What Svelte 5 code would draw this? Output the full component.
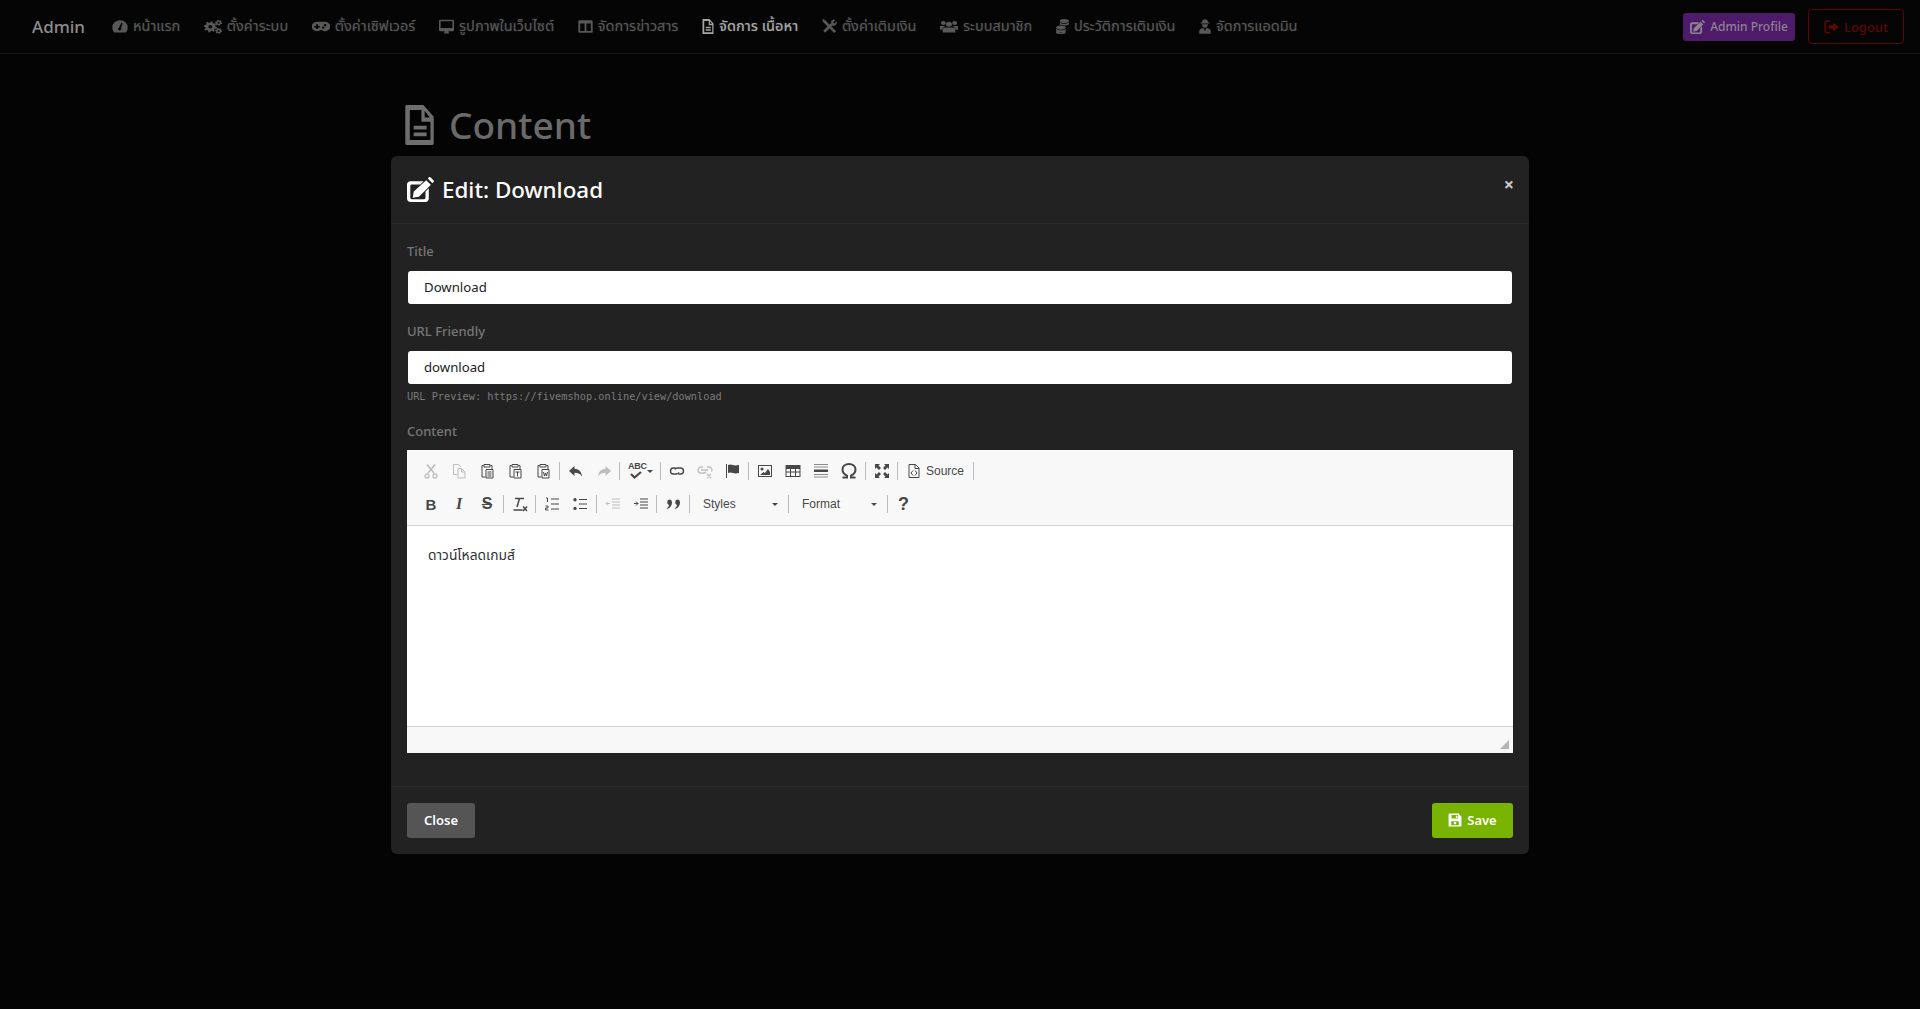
<script>
  function gear(cx, cy, r, teeth = 8) {
    const pts = [];
    const n = teeth * 4;
    for (let i = 0; i < n; i++) {
      const a = ((i + 0.5) / n) * Math.PI * 2;
      const rr = i % 4 < 2 ? r : r * 0.74;
      pts.push(`${(cx + Math.cos(a) * rr).toFixed(2)} ${(cy + Math.sin(a) * rr).toFixed(2)}`);
    }
    const h = r * 0.3;
    return `M${pts.join('L')}Z M${cx - h} ${cy}a${h} ${h} 0 1 0 ${2 * h} 0a${h} ${h} 0 1 0 ${-2 * h} 0Z`;
  }

  const navIcons = {
    gauge: { f: 'M12 2A11.500 11.500 0 0 0 .5 13.500c0 3 1 5.800 3 8h17c2-2.200 3-5 3-8A11.500 11.500 0 0 0 12 2zM10.600 13.600l3.600-7.600 1.800.7-2.400 8a2.400 2.400 0 1 1-3-1.100z' },
    cogs: { f: gear(8.5, 12.5, 9, 8) + gear(19.5, 6, 4.8, 6) + gear(19.5, 19, 4.8, 6) },
    game: { f: 'M7 4.500h10a7.500 7.500 0 0 1 0 15c-2.200 0-3-2-5-2s-2.800 2-5 2a7.500 7.500 0 0 1 0-15zM5.500 8.500V11H3v2.500h2.500V16H8v-2.500h2.500V11H8V8.500zM17.500 8a1.800 1.800 0 1 0 0 3.600 1.800 1.800 0 0 0 0-3.600zM15 12a1.800 1.800 0 1 0 0 3.600 1.800 1.800 0 0 0 0-3.600z' },
    desktop: { f: 'M2 1h20a2 2 0 0 1 2 2v14.500a2 2 0 0 1-2 2h-7l.5 2 1.200 1.500H7.300l1.200-1.500.5-2H2a2 2 0 0 1-2-2V3a2 2 0 0 1 2-2zM2.600 3.600V14.500h18.800V3.600z' },
    columns: { f: 'M2.500 2h19A2 2 0 0 1 23.500 4v16a2 2 0 0 1-2 2h-19a2 2 0 0 1-2-2V4a2 2 0 0 1 2-2zM3.500 7V19H10.500V7zM13.500 7V19H20.500V7z' },
    file: { f: 'M2 0h13l8 7v16a1 1 0 0 1-1 1H2a1 1 0 0 1-1-1V1a1 1 0 0 1 1-1zM4.500 3v18h16V10h-7V3zM16 3.500V7.500H20zM7.500 12.500h10v2.200h-10zM7.500 16.500h10v2.200h-10z' },
    tools: { s: 'M3.500 20.500L17 7M3 3l18 18', w: 4.500, f: 'M14.500 3.500a5.500 5.500 0 0 1 7-2l-3.500 3.500.5 1.500 1.500.5 3.500-3.500a5.500 5.500 0 0 1-7 7zM0 1.500L2.500 0l4.500 4.500-2.500 2.500z' },
    users: { f: 'M12 4.500a4 4 0 1 1 0 8 4 4 0 0 1 0-8zM4.500 3a3.300 3.300 0 1 1 0 6.600 3.300 3.300 0 0 1 0-6.600zM19.500 3a3.300 3.300 0 1 1 0 6.600 3.300 3.300 0 0 1 0-6.600zM7 13.500h10c2.200 0 3.500 1.500 3.500 4.500v3.500h-17V18c0-3 1.300-4.500 3.500-4.500zM0 11h5c.7.800 1.300 1.200 2 1.300-2.500.6-4 2.200-4 5H0zM24 11h-5c-.7.800-1.300 1.200-2 1.300 2.500.6 4 2.200 4 5h3z' },
    coins: { f: 'M15 0c5 0 9 1.200 9 3.200S20 6.500 15 6.500s-8-1.300-8-3.300S10 0 15 0zM7 5c1.500 1.500 4.500 2.500 8 2.500 3.500 0 7-.8 9-2.500v3c-1 1.500-4 2.500-7 2.500-3.500-1-7-1.500-10-1.500zM9 10.500c-5 0-9 1.200-9 3.200s4 3.300 9 3.300 9-1.300 9-3.300-4-3.200-9-3.200zM0 15.500v2.700c0 2 4 3 9 3s9-1 9-3v-2.700c-2 1.500-5.500 2.500-9 2.500s-7-1-9-2.500zM0 19.700V21.500c0 1.700 4 2.500 9 2.500s9-.8 9-2.500v-1.800c-2 1.500-5.500 2.200-9 2.200s-7-.7-9-2.200z' },
    user: { f: 'M12 .5c3.500 0 5.500 1.500 6 4.500l3 1v1H3V6l3-1C6.500 2 8.500.5 12 .5zM6 8.500h12c-.3 3.500-2.500 5.500-6 5.500s-5.700-2-6-5.500zM5 15l4-.8 3 5 3-5 4 .8c3 .8 4.500 2.500 4.500 5v3.500H.5V20c0-2.500 1.500-4.200 4.500-5z' },
    edit: { vb: 26, f: 'M3.500 4h12.500l-3.200 3.200H4.500a1.300 1.300 0 0 0-1.300 1.300v11.500a1.300 1.300 0 0 0 1.300 1.300h12a1.300 1.300 0 0 0 1.300-1.300v-6l3.200-3.200v9.700a3.500 3.500 0 0 1-3.500 3.500H3.500A3.500 3.500 0 0 1 0 20.500V7.500A3.500 3.500 0 0 1 3.500 4zM18.500 3l4.500 4.500-11.500 11.500-6 1 1-6zM20 1.500l1.200-1.200a1 1 0 0 1 1.400 0l3 3a1 1 0 0 1 0 1.400L24.500 6z' },
    signout: { f: 'M9.500 3.500H5a2 2 0 0 0-2 2v13a2 2 0 0 0 2 2h4.500v2.500H4.500A4 4 0 0 1 .5 19V5a4 4 0 0 1 4-4h5zM14.500 4.500L24 12l-9.500 7.500v-4.500H7.500V9h7z' },
    save: { f: 'M2 1h16l5 5v16a1 1 0 0 1-1 1H2a1 1 0 0 1-1-1V2a1 1 0 0 1 1-1zM6 3.500V9.500h11V3.500zM13.500 4.500h2.500v4h-2.500zM5.500 14V21h13V14zM12 15a2.300 2.300 0 1 1 0 4.600 2.300 2.300 0 0 1 0-4.600z' }
  };

  const nav = [
    { ic: 'gauge', label: 'หน้าแรก', w: 16 },
    { ic: 'cogs', label: 'ตั้งค่าระบบ', w: 18 },
    { ic: 'game', label: 'ตั้งค่าเซิฟเวอร์', w: 18 },
    { ic: 'desktop', label: 'รูปภาพในเว็บไซต์', w: 15 },
    { ic: 'columns', label: 'จัดการข่าวสาร', w: 15 },
    { ic: 'file', label: 'จัดการ เนื้อหา', w: 12, active: true },
    { ic: 'tools', label: 'ตั้งค่าเติมเงิน', w: 15 },
    { ic: 'users', label: 'ระบบสมาชิก', w: 18 },
    { ic: 'coins', label: 'ประวัติการเติมเงิน', w: 13 },
    { ic: 'user', label: 'จัดการแอดมิน', w: 12 }
  ];

  const clip = 'M4.500 2.500H3v11.500h3.500M11.500 2.500H13V6M5 1.500h6v2.500H5z';
  const ck = {
    cut: { s: 'M4 1.500l7 8.500M12 1.500l-7 8.500', w: 1.500, c: 'M4 11a2 2 0 1 0 0 4 2 2 0 0 0 0-4zM12 11a2 2 0 1 0 0 4 2 2 0 0 0 0-4z' },
    copy: { s: 'M6 11.500H2.500V1.500h5l2 2.500M7 5.500h3.500l3.500 3.500v6H7zM10.500 5.500V9H14', w: 1 },
    paste: { s: clip + 'M7 6.500h7v8.500H7zM8.500 9h4M8.500 11h4M8.500 13h4', w: 1 },
    pastet: { s: clip + 'M7 6.500h7v8.500H7zM8.500 9h4M10.500 9v4.500', w: 1 },
    pastew: { s: clip + 'M7 6.500h7v8.500H7zM8.500 9l1 4 1-3 1 3 1-4', w: 1 },
    undo: { f: 'M6.500 3L1 8l5.500 5V9.800c3 0 5.500.7 7.500 3.700C13.500 9 11 6 6.500 5.800z' },
    redo: { f: 'M9.500 3L15 8l-5.500 5V9.800c-3 0-5.500.7-7.500 3.700C2.500 9 5 6 9.500 5.800z' },
    link: { s: 'M6.500 5H4.500a3 3 0 0 0 0 6h3a3 3 0 0 0 2.500-1.500M9.500 11h2a3 3 0 0 0 0-6h-3A3 3 0 0 0 6 6.500', w: 1.400 },
    unlink: { s: 'M6 4H4a3 3 0 0 0 0 6h3a3 3 0 0 0 2-1M10 4h2a3 3 0 0 1 2.500 4.500M4 7h7M10 11l4 4M14 11l-4 4', w: 1.300 },
    flag: { s: 'M1.500 1v14', w: 1, f: 'M3 2c2-1 3.500-.5 5 0s3 .5 6 0v8c-3 .5-4.500.5-6 0s-3-1-5 0z' },
    image: { f: 'M1 2h14v12H1zM2 3v10h12V3zM5 4.500a1.500 1.500 0 1 1 0 3 1.500 1.500 0 0 1 0-3zM3 12l3.500-3 1.500 1 3-4 2 3v3z' },
    table: { f: 'M0.500 2h15v12H.5zM1.500 6v2.500h3.500V6zM6 6v2.500h4V6zM11 6v2.500h3.500V6zM1.500 9.500V13h3.500V9.500zM6 9.500V13h4V9.500zM11 9.500V13h3.500V9.500z' },
    hr: { f: 'M1 6.500h14v2.500H1z', s2: 'M1 1.500h14M1 4h14M1 11.500h14M1 14h14' },
    omega: { s: 'M1.500 14.500h4.500v-1.800C3.500 11.500 1.500 9.500 1.500 6.500 1.500 3 4.300 1 8 1s6.500 2 6.500 5.500c0 3-2 5-4.500 6.200v1.800h4.500', w: 2 },
    max: { f: 'M1 1h5L4.500 2.500 7 5 5 7 2.500 4.500 1 6zM15 1v5L13.500 4.500 11 7 9 5l2.500-2.500L10 1zM1 15v-5l1.500 1.500L5 9l2 2-2.500 2.500L6 15zM15 15h-5l1.500-1.500L9 11l2-2 2.500 2.500L15 10z' },
    source: { s: 'M3 1.500h6.500L13 5v9.500H3zM9 1.500V5.500h4M7 7.500L5 10l2 2.500M9 7.500l2 2.500-2 2.500', w: 1 },
    spell: { s: 'M3 11l3.500 3.500L13 9', w: 2.200 },
    outdent: { s: 'M7 3h8M7 6h8M7 9h8M7 12h8M5 7.500H1M3 5.500l-2 2 2 2', w: 1 },
    indent: { s: 'M7 3h8M7 6h8M7 9h8M7 12h8M1 7.500h4M3 5.500l2 2-2 2', w: 1 },
    ol: { s: 'M7 3h8M7 8h8M7 13h8M2 2h1.500v4M1.500 10h2.500v2H1.500v2H4.500', w: 1 },
    ul: { s: 'M7 3.500h8M7 8h8M7 12.500h8', w: 1.100, f: 'M3 2a1.700 1.700 0 1 1 0 3.400A1.700 1.700 0 0 1 3 2zM3 10.700a1.700 1.700 0 1 1 0 3.400 1.700 1.700 0 0 1 0-3.400z' },
    quote: { f: 'M4 3.500a3 3 0 0 1 3 3c0 3-2 5.500-4.500 6.500l-.5-1c1-.7 2-1.800 2-3a3 3 0 0 1 0-5.500zM12 3.500a3 3 0 0 1 3 3c0 3-2 5.500-4.500 6.500l-.5-1c1-.7 2-1.800 2-3a3 3 0 0 1 0-5.500z' },
    clear: { s: 'M3 2.500h9M7.500 2.500L5 11M1.500 14h9M11 10.500l4 4.500M15 10.500l-4 4.500', w: 1.500 }
  };

  const row1 = [
    [{ i: 'cut', off: true }, { i: 'copy', off: true }, { i: 'paste' }, { i: 'pastet' }, { i: 'pastew' }],
    [{ i: 'undo' }, { i: 'redo', off: true }],
    [{ spell: true }],
    [{ i: 'link' }, { i: 'unlink', off: true }, { i: 'flag' }],
    [{ i: 'image' }, { i: 'table' }, { i: 'hr' }, { i: 'omega' }],
    [{ i: 'max' }],
    [{ i: 'source', label: 'Source' }]
  ];
  const row2a = [
    [{ t: 'B', cls: 'bold' }, { t: 'I', cls: 'ital' }, { t: 'S', cls: 'strike' }],
    [{ i: 'clear' }],
    [{ i: 'ol' }, { i: 'ul' }],
    [{ i: 'outdent', off: true }, { i: 'indent' }],
    [{ i: 'quote' }]
  ];
</script>

{#snippet icon(name, cls, w)}
  <svg class={cls} style:width={w ? `${w}px` : null} viewBox="0 0 {navIcons[name].vb ?? 24} 24" preserveAspectRatio="none" aria-hidden="true">
    {#if navIcons[name].s}
      <path d={navIcons[name].s} fill="none" stroke="currentColor" stroke-width={navIcons[name].w} />
    {/if}
    {#if navIcons[name].f}
      <path d={navIcons[name].f} fill="currentColor" fill-rule="evenodd" />
    {/if}
  </svg>
{/snippet}

{#snippet ckIcon(name)}
  <svg class="ck" viewBox="0 0 16 16" aria-hidden="true">
    {#if ck[name].s}
      <path d={ck[name].s} fill="none" stroke="currentColor" stroke-width={ck[name].w ?? 1.3} />
    {/if}
    {#if ck[name].s2}
      <path d={ck[name].s2} fill="none" stroke="#8c8c8c" stroke-width="1" />
    {/if}
    {#if ck[name].c}
      <path d={ck[name].c} fill="none" stroke="currentColor" stroke-width="1.300" />
    {/if}
    {#if ck[name].f}
      <path d={ck[name].f} fill="currentColor" fill-rule="evenodd" />
    {/if}
  </svg>
{/snippet}

{#snippet groups(list)}
  {#each list as group}
    <div class="grp">
      {#each group as b}
        <span class="tb" class:off={b.off} class:wide={b.label} class:spellb={b.spell}>
          {#if b.spell}
            <span class="abc">ABC</span>
            {@render ckIcon('spell')}
            <i class="caret"></i>
          {:else if b.t}
            <span class={b.cls}>{b.t}</span>
          {:else}
            {@render ckIcon(b.i)}
            {#if b.label}<span class="lbl">{b.label}</span>{/if}
          {/if}
        </span>
      {/each}
    </div>
    <i class="sep"></i>
  {/each}
{/snippet}

<div class="page">
  <header class="nav">
    <span class="brand">Admin</span>
    <nav class="links">
      {#each nav as item}
        <span class="link" class:active={item.active}>
          {@render icon(item.ic, 'nic', item.w)}
          <span>{item.label}</span>
        </span>
      {/each}
    </nav>
    <div class="actions">
      <span class="profile">{@render icon('edit', 'aic')}Admin Profile</span>
      <span class="logout">{@render icon('signout', 'aic')}Logout</span>
    </div>
  </header>

  <main class="main">
    <h1>{@render icon('file', 'hic')}Content</h1>
  </main>
</div>

<div class="modal">
  <div class="m-head">
    <h2>{@render icon('edit', 'mic')}Edit: Download</h2>
    <span class="x">×</span>
  </div>
  <div class="m-body">
    <div class="label first">Title</div>
    <div class="input">Download</div>
    <div class="label second">URL Friendly</div>
    <div class="input">download</div>
    <div class="preview">URL Preview: https://fivemshop.online/view/download</div>
    <div class="label third">Content</div>
    <div class="editor">
      <div class="toolbar">
        <div class="trow">{@render groups(row1)}</div>
        <div class="trow">
          {@render groups(row2a)}
          <span class="combo"><span>Styles</span><i class="caret"></i></span>
          <i class="sep"></i>
          <span class="combo"><span>Format</span><i class="caret"></i></span>
          <i class="sep"></i>
          <span class="tb help">?</span>
        </div>
      </div>
      <div class="content">ดาวน์โหลดเกมส์</div>
      <div class="foot"><i class="resize"></i></div>
    </div>
  </div>
  <div class="m-foot">
    <span class="btn close">Close</span>
    <span class="btn save">{@render icon('save', 'sic')}Save</span>
  </div>
</div>

<style>
  :global(body) {
    background: #040404;
    font-family: "Noto Sans", "Noto Sans Thai", "Noto Sans CJK SC", sans-serif;
    height: 1009px;
    overflow: hidden;
  }
  .page { height: 1009px; }
  .nav {
    height: 53px;
    border-bottom: 1px solid #141414;
    background: #050505;
    display: flex;
    align-items: center;
    padding: 0 16px 0 32px;
  }
  .brand { color: #8d8d8d; font-size: 17px; font-weight: 500; width: 80px; }
  .links { display: flex; align-items: center; gap: 23.7px; flex: 1; }
  .link {
    display: flex; align-items: center; gap: 5px; color: #585858; font-size: 14.5px; white-space: nowrap;
    text-shadow: 0 0 2px rgba(88, 88, 88, .45);
  }
  .link.active { color: #a5a5a5; font-weight: 500; }
  .nic { width: 16px; height: 15px; flex: none; }
  .actions { display: flex; align-items: center; gap: 13px; }
  .profile {
    display: flex; align-items: center; gap: 5px;
    height: 28px; width: 112px; box-sizing: border-box; justify-content: center;
    background: #4e1a6a; color: #8c8291; border-radius: 3px; font-size: 12px; font-weight: 500;
  }
  .logout {
    display: flex; align-items: center; justify-content: center; gap: 5px;
    height: 35px; width: 96px; box-sizing: border-box;
    border: 1px solid #5a0508; color: #5f0508; border-radius: 4px; font-size: 13px; font-weight: 500;
  }
  .aic { width: 15px; height: 14px; }
  .main { width: 1140px; margin: 0 auto; padding-left: 14px; box-sizing: border-box; }
  h1 {
    margin: 48px 0 0; display: flex; align-items: center; gap: 14px;
    font-size: 37px; font-weight: 500; line-height: 46px; color: #6a6a6a;
  }
  .hic { width: 31px; height: 40px; color: #6e6e6e; }

  .modal {
    position: absolute; left: 391px; top: 156px; width: 1138px; height: 698px;
    background: #222; border-radius: 6px; box-sizing: border-box;
    display: flex; flex-direction: column;
  }
  .m-head {
    height: 68px; box-sizing: border-box; border-bottom: 1px solid #2a2a2a;
    display: flex; justify-content: space-between; padding: 0 15px 0 16px;
  }
  h2 {
    margin: -1px 0 0; display: flex; align-items: center; gap: 8px; height: 68px;
    font-size: 22.4px; font-weight: 500; color: #fff;
  }
  .mic { width: 27px; height: 25px; }
  .x { color: #ccc; font-size: 18px; font-weight: 700; line-height: 18px; margin-top: 19px; }
  .m-body { padding: 0 16px; flex: 1; }
  .label { color: #777; font-size: 13px; font-weight: 500; line-height: 18px; }
  .first { margin-top: 18px; margin-bottom: 11px; }
  .second { margin-top: 18px; margin-bottom: 11px; }
  .third { margin-top: 19px; margin-bottom: 10px; }
  .input {
    height: 33px; background: #fff; border-radius: 3px; color: #222; margin: 0 1px;
    font-size: 13.2px; line-height: 33px; padding-left: 16px;
  }
  .preview {
    margin-top: 5px; font-family: "DejaVu Sans Mono", monospace; font-size: 10.25px;
    line-height: 14px; color: #7c7c7c;
  }
  .editor { background: #fff; height: 303px; display: flex; flex-direction: column; }
  .toolbar {
    height: 76px; box-sizing: border-box; background: #f8f8f8; border-bottom: 1px solid #d1d1d1;
    padding: 7px 0 0 10px;
  }
  .trow { display: flex; align-items: center; height: 28px; margin-bottom: 5px; }
  .grp { display: flex; }
  .sep { width: 1px; height: 18px; background: #bcbcbc; margin: 0 2px 0 1.5px; flex: none; }
  .tb {
    width: 28px; height: 28px; display: flex; align-items: center; justify-content: center;
    color: #474747; flex: none;
  }
  .tb.off { color: #bdbdbd; }
  .tb.wide { width: 71px; gap: 4px; justify-content: flex-start; padding-left: 6px; box-sizing: border-box; }
  .ck { width: 16px; height: 16px; flex: none; }
  .lbl, .combo { font-family: "Liberation Sans", sans-serif; font-size: 12px; color: #484848; }
  .spellb { width: 36px; position: relative; justify-content: flex-start; padding-left: 6px; box-sizing: border-box; }
  .abc {
    position: absolute; left: 6px; top: 5px; font-family: "Liberation Sans", sans-serif;
    font-size: 9px; font-weight: 700; letter-spacing: -.3px; line-height: 9px;
  }
  .caret {
    width: 0; height: 0; border-left: 3px solid transparent; border-right: 3px solid transparent;
    border-top: 3px solid #474747; display: block;
  }
  .spellb .caret { position: absolute; left: 25px; top: 13px; }
  .bold, .ital, .strike { font-family: "Liberation Serif", serif; font-size: 16px; font-weight: 700; }
  .bold { font-family: "Liberation Sans", sans-serif; font-size: 15px; }
  .ital { font-style: italic; }
  .strike { font-family: "Liberation Sans", sans-serif; text-decoration: line-through; font-size: 16px; }
  .combo {
    width: 94.5px; height: 28px; box-sizing: border-box; padding: 0 8px 0 11.5px;
    display: flex; align-items: center; justify-content: space-between; flex: none;
  }
  .help { font-family: "Liberation Sans", sans-serif; font-size: 18px; font-weight: 700; }
  .content { flex: 1; padding: 20px 0 0 21px; font-size: 13.8px; line-height: 18px; color: #333; }
  .foot {
    height: 27px; box-sizing: border-box; background: #f8f8f8; border-top: 1px solid #d1d1d1;
    position: relative;
  }
  .resize {
    position: absolute; right: 4px; bottom: 4px; width: 0; height: 0;
    border-left: 9px solid transparent; border-bottom: 9px solid #b5b5b5; display: block;
  }
  .m-foot {
    height: 68px; box-sizing: border-box; border-top: 1px solid #2a2a2a;
    display: flex; justify-content: space-between; align-items: flex-start;
    padding: 16px;
  }
  .btn {
    height: 35px; border-radius: 3px; display: flex; align-items: center; justify-content: center;
    color: #fff; font-size: 13px; font-weight: 600; box-sizing: border-box; gap: 5px; padding-bottom: 2px;
  }
  .close { background: #555; width: 68px; }
  .save { background: #77b300; width: 81px; }
  .sic { width: 14px; height: 14px; }
</style>
